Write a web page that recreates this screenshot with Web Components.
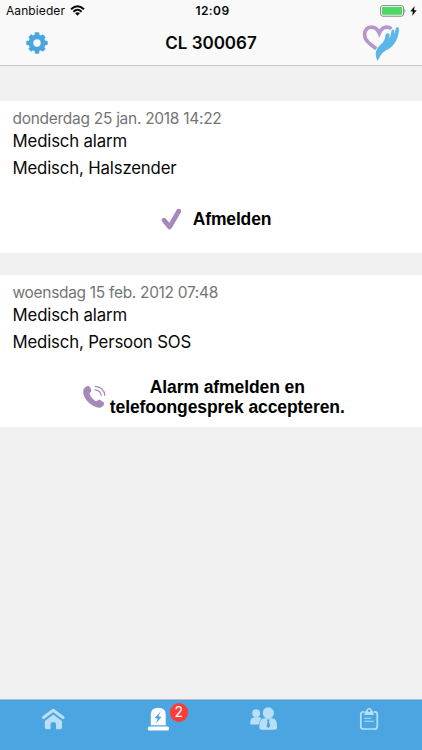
<!DOCTYPE html>
<html lang="nl"><head><meta charset="utf-8"><title>CL 300067</title>
<style>
html,body{margin:0;height:100%;background:#f1f1f1;overflow:hidden}
body{font-family:Inter,"Liberation Sans",sans-serif;color:#080808}
</style></head><body>
<alarm-app></alarm-app>
<script>
const define=(name,html,setup)=>customElements.define(name,class extends HTMLElement{
  connectedCallback(){
    if(this.shadowRoot)return;
    const t=document.createElement('template');t.innerHTML=html;
    this.attachShadow({mode:'open'}).append(t.content.cloneNode(true));
    if(setup)setup(this,this.shadowRoot);
  }
});

// One line of text, tracked so that it spans the width given in pixels.
define('text-line',`<style>:host{display:block;width:max-content;white-space:nowrap}span{display:inline-block;white-space:nowrap}</style><span><slot></slot></span>`,(el,root)=>{
  const want=+el.getAttribute('span'),s=root.querySelector('span');
  if(!want)return;
  const n=el.textContent.length,w=s.getBoundingClientRect().width;
  s.style.letterSpacing=((want-w)/n)+'px';
});

define('status-bar',`<style>
:host{display:grid;grid-template-columns:1fr auto 1fr;height:22px;align-items:center;font-size:12px;line-height:22px;padding:0 5px 0 6px}
.l{display:flex;align-items:center;gap:5px}.r{display:flex;justify-content:flex-end;align-items:center;gap:4px}
svg{display:block}.l svg{margin-bottom:2px}.time{font-weight:600;font-size:12px;padding-left:2px}
</style>
<div class="l"><text-line span="59">Aanbieder</text-line>
<svg width="15" height="11" viewBox="0 0 15 11"><g fill="none" stroke="#080808" stroke-width="2"><path d="M1 4.2Q7.5-1.8 14 4.2M3.4 6.7Q7.500 2.900 11.600 6.700"/></g><path d="M5.100 8.200Q7.500 6.300 9.900 8.200L7.500 10.700Z" fill="#080808"/></svg></div>
<text-line class="time" span="34">12:09</text-line>
<div class="r"><svg width="27" height="12" viewBox="0 0 27 12"><rect x="1.600" y=".6" width="23" height="10.600" rx="2.300" fill="none" stroke="#858585" stroke-width="1"/><rect x="3" y="2" width="20.200" height="7.800" rx="1" fill="#4cd964"/><path d="M25.500 4Q27.100 5.900 25.500 7.800Z" fill="#777"/></svg>
<svg width="7" height="10" viewBox="0 0 7 10"><path d="M4.700 0L.3 5.500H3L2 10L6.700 4.200H4Z" fill="#080808"/></svg></div>`);

define('nav-bar',`<style>
:host{display:grid;grid-template-columns:1fr auto 1fr;height:43px;align-items:center;padding:0 22px 0 26px}
.title{font-size:17px;font-weight:600;line-height:43px;margin-right:4px}.gear{display:block;margin-bottom:2px}.logo{display:block;justify-self:end;margin-bottom:2px}
</style>
<svg class="gear" width="22" height="22" viewBox="-11 -11 22 22"><g fill="#4ba5df"><circle r="8.500"/><g><rect x="-2.300" y="-10.700" width="4.600" height="21.400" rx="1"/><rect x="-10.700" y="-2.300" width="21.400" height="4.600" rx="1"/></g><g transform="rotate(45)"><rect x="-2.300" y="-10.300" width="4.600" height="20.600" rx="1"/><rect x="-10.300" y="-2.300" width="20.600" height="4.600" rx="1"/></g></g><circle r="3.700" fill="#f9f9f9"/></svg>
<text-line class="title" span="91.500">CL 300067</text-line>
<svg class="logo" width="38" height="38" viewBox="0 0 38 38"><path d="M14.300 24.800C7 19.500 2.600 16.200 2.600 10.700C2.700 5.400 5.800 3.100 9.400 3.100C13.200 3.100 15.900 5.700 17.300 9C19 4.900 22 3 25.200 3.100Q27.800 3.200 29.300 5" fill="none" stroke="#b697c9" stroke-width="3.700"/><path d="M15.500 37C12.900 31 13.200 26.500 17 22.300C20.200 18.800 23.400 16.500 23.300 12C23.500 8.600 27.400 8.500 27.600 11.200L27.300 14.300C28.600 12.500 28.800 10 29.300 7.700C29.700 5 32.400 4.800 32.300 7.500L32 10C33 8.500 33.400 6.500 33.700 4.600C34.400 2.600 37.200 2.800 37 5C36.900 11 35 16.500 31.200 21C28.400 24.800 25 25.400 21 28.500C18.200 30.900 17.500 34 15.500 37Z" fill="#5cb7e8"/></svg>`);

define('alarm-card',`<style>
:host{display:flex;flex-direction:column;box-sizing:border-box;height:152px;background:#fff;padding:7px 12.500px 0;font-size:16.800px}
.date{height:22px;line-height:22px;color:#747474;font-size:15.500px}
.line{height:27px;line-height:22px}
.action{display:flex;justify-content:center;align-items:center;height:44px;margin-top:13px;font:bold 17.500px/20px "Liberation Sans",sans-serif;color:#000}
</style><div class="date"><slot name="date"></slot></div><div class="line"><slot name="title"></slot></div><div class="line"><slot name="source"></slot></div><div class="action"><slot></slot></div>`);

define('card-action',`<style>
:host{display:flex;align-items:center;gap:var(--gap,5px)}.label{display:flex;flex-direction:column;align-items:center}
</style><slot name="icon"></slot><div class="label"><slot></slot></div>`);

define('icon-check',`<style>:host,svg{display:block}</style><svg width="21" height="23" viewBox="0 0 21 23"><path d="M3.100 12.200L8.600 19L17.700 3.200" fill="none" stroke="#a688bd" stroke-width="4.800" stroke-linecap="round" stroke-linejoin="round"/></svg>`);
define('icon-phone',`<style>:host,svg{display:block}</style><svg width="23" height="24" viewBox="0 0 23 24"><path d="M1.300 3.200Q3.500.5 5.700 1.100Q6.500 1.200 8.200 4.700Q9 6.400 6.500 8.300C7.300 11.500 10.300 14.900 13.200 16.300Q15.600 14 17.200 14.900L20.300 17.100Q21.800 18.200 20.700 20Q18.900 23.100 16.500 22.800C8 21.800-.8 13 .3 5.300Q.5 4 1.300 3.200Z" fill="#a688bd"/><g fill="none" stroke="#a688bd" stroke-width="1.200" stroke-linecap="round"><path d="M12.200 1.300C17.700 1.500 21.500 5.200 21.800 10.300M12 4.800C15.700 5.100 17.800 7.100 18.200 10.500"/></g></svg>`);

define('tab-bar',`<style>
:host{display:grid;grid-template-columns:repeat(4,1fr);height:50px;border-top:1px solid #a9bfcd;background:#4aa5e0}
</style><slot></slot>`);
define('tab-item',`<style>
:host{display:flex;justify-content:center;padding-top:6px}.i{position:relative;width:30px;height:28px}
</style><div class="i"><slot></slot></div>`);
define('tab-icon',`<style>:host,svg{display:block}</style><svg width="30" height="28" viewBox="0 0 30 28"></svg>`,(el,root)=>{
 const shapes={
 home:`<g fill="#b9dff6"><path d="M5.500 11.500L15.200 4.200L25 11.500" fill="none" stroke="#b9dff6" stroke-width="3" stroke-linecap="round" stroke-linejoin="round"/><path d="M15.200 8.500L24 15V21.500Q24 23.300 22 23.300H18V18.500Q18 16 15.300 16Q12.600 16 12.600 18.500V23.300H8.600Q6.800 23.300 6.800 21.500V15Z"/></g>`,
 alarm:`<g fill="#fff"><path d="M7.800 19.200V8.200Q7.800 1.700 15.300 1.700T22.700 8.200V19.200Z"/><rect x="4.800" y="20.500" width="21.200" height="4" rx="1.600"/></g><path d="M17.600 5.500L11.500 12.100L14.700 12.700L12.800 17.700L18.400 11.100L15.400 10.200Z" fill="#4aa5e0"/>`,
 people:`<g fill="#b9dff6"><ellipse cx="7.200" cy="7.300" rx="3.900" ry="4"/><path d="M1.300 18.600V16Q1.300 11.600 5.500 11.300H10Q12 11.400 12.500 12.200Q10.500 13.800 10 18.600Z"/><ellipse cx="19.300" cy="7" rx="5.600" ry="5.700"/><path d="M10.400 20Q10.400 12.300 15.800 12.200H22.800Q28 12.300 28 20V21.500Q28 23.800 25.500 23.800H13Q10.400 23.800 10.400 21.500Z"/></g><path d="M17.700 13.500H20.900L20 15.600L21.200 20L19.300 22.200L17.500 20L18.600 15.600Z" fill="#4aa5e0"/>`,
 notes:`<path d="M10.200 5.900H9.500Q6.800 5.900 6.800 8.500V20.400Q6.800 23 9.500 23H20.700Q23.300 23 23.300 20.400V8.500Q23.300 5.900 20.700 5.900H20" fill="none" stroke="#b9dff6" stroke-width="1.700"/><path d="M10.500 8.900V6.500Q10.500 5 12.300 4.800Q12.600 2 15.100 2T17.800 4.800Q19.600 5 19.600 6.500V8.900Z" fill="#b9dff6"/><circle cx="15.100" cy="4.700" r="1.200" fill="#4aa5e0"/><path d="M10.300 12.300H17.300M10.300 15.200H20" stroke="#b9dff6" stroke-width="1.100"/>`};
 root.querySelector('svg').innerHTML=shapes[el.getAttribute('name')];
});
define('count-badge',`<style>:host{position:absolute;left:26.300px;top:-3px;width:18.500px;height:18.500px;border-radius:50%;background:#fb3d38;color:#fff;font-size:14px;line-height:18.500px;text-align:center}</style><slot></slot>`);

define('alarm-app',`<style>
:host{display:flex;flex-direction:column;height:100%;background:#f1f1f1}
header{background:#f9f9f9;border-bottom:1px solid #c6c6c6}
main{flex:1;display:flex;flex-direction:column;gap:21.600px;padding-top:35px}
.a{--gap:11px;margin-left:10px}.b{--gap:4px;margin:9.500px 0 0 5.500px}
</style>
<header><status-bar></status-bar><nav-bar></nav-bar></header>
<main>
<alarm-card><text-line slot="date" span="209">donderdag 25 jan. 2018 14:22</text-line><text-line slot="title" span="114.500">Medisch alarm</text-line><text-line slot="source" span="164">Medisch, Halszender</text-line><card-action class="a"><icon-check slot="icon"></icon-check><text-line span="78.500">Afmelden</text-line></card-action></alarm-card>
<alarm-card><text-line slot="date" span="205.500">woensdag 15 feb. 2012 07:48</text-line><text-line slot="title" span="114.500">Medisch alarm</text-line><text-line slot="source" span="178.500">Medisch, Persoon SOS</text-line><card-action class="b"><icon-phone slot="icon"></icon-phone><text-line span="155">Alarm afmelden en</text-line><text-line span="235">telefoongesprek accepteren.</text-line></card-action></alarm-card>
</main>
<tab-bar><tab-item><tab-icon name="home"></tab-icon></tab-item><tab-item><tab-icon name="alarm"></tab-icon><count-badge>2</count-badge></tab-item><tab-item><tab-icon name="people"></tab-icon></tab-item><tab-item><tab-icon name="notes"></tab-icon></tab-item></tab-bar>`);
</script></body></html>
